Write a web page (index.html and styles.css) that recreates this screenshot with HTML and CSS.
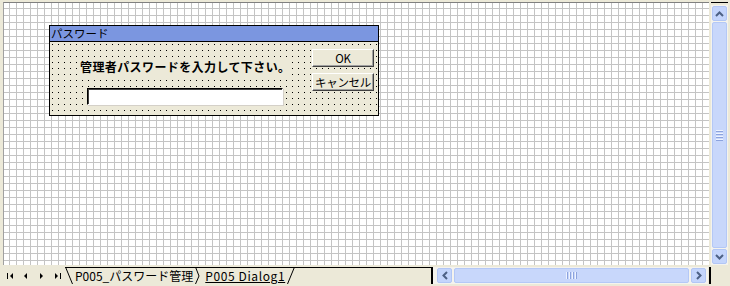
FILE: index.html
```html
<!DOCTYPE html>
<html lang="ja">
<head>
    <meta charset="UTF-8">
    <title>パスワード</title>
    <link rel="stylesheet" href="styles.css">
</head>
<body>
    <div class="window">
        <div class="main">
            <div class="sheet">
                <!-- user form dialog, floating over the sheet grid -->
                <div class="dialog">
                    <div class="dialog-title">パスワード</div>
                    <div class="dialog-body">
                        <div class="dialog-left">
                            <div class="prompt">管理者パスワードを入力して下さい。</div>
                            <div class="pass"></div>
                        </div>
                        <div class="dialog-buttons">
                            <button class="btn">OK</button>
                            <button class="btn">キャンセル</button>
                        </div>
                    </div>
                </div>
            </div>
            <div class="vscroll">
                <div class="split-top"></div>
                <div class="sb-btn">
                    <svg width="9" height="6" viewBox="0 0 9 6"><path d="M1 5 L4.5 1.5 L8 5" fill="none" stroke="#4d6185" stroke-width="2"/></svg>
                </div>
                <div class="vthumb">
                    <div class="grip-v"><i></i><i></i><i></i><i></i></div>
                </div>
                <div class="sb-btn">
                    <svg width="9" height="6" viewBox="0 0 9 6"><path d="M1 1 L4.5 4.5 L8 1" fill="none" stroke="#4d6185" stroke-width="2"/></svg>
                </div>
            </div>
        </div>
        <div class="bottom">
            <div class="nav">
                <svg width="60" height="12" viewBox="0 0 60 12">
                    <rect x="4" y="3" width="1" height="6" fill="#000"/>
                    <path d="M10 3 L7 6 L10 9 Z" fill="#000"/>
                    <path d="M24 3 L21 6 L24 9 Z" fill="#000"/>
                    <path d="M37 3 L40 6 L37 9 Z" fill="#000"/>
                    <path d="M52 3 L55 6 L52 9 Z" fill="#000"/>
                    <rect x="57" y="3" width="1" height="6" fill="#000"/>
                </svg>
            </div>
            <div class="tabs">
                <svg class="slant" width="8" height="17" viewBox="0 0 8 17"><path d="M0.5 0 L7.5 17" stroke="#000" fill="none"/></svg>
                <span class="tab">P005_パスワード管理</span>
                <svg class="slant" width="8" height="17" viewBox="0 0 8 17"><path d="M0.5 0 L4 9 M4 9 L0.5 17" stroke="#000" fill="none"/></svg>
                <span class="tab active">P005 Dialog1</span>
                <svg class="slant" width="8" height="17" viewBox="0 0 8 17"><path d="M7.5 0 L0.5 17" stroke="#000" fill="none"/></svg>
            </div>
            <div class="hscroll">
                <div class="sb-btn h">
                    <svg width="6" height="9" viewBox="0 0 6 9"><path d="M5 1 L1.5 4.5 L5 8" fill="none" stroke="#4d6185" stroke-width="2"/></svg>
                </div>
                <div class="hthumb">
                    <div class="grip-h"><i></i><i></i><i></i><i></i></div>
                </div>
                <div class="sb-btn h">
                    <svg width="6" height="9" viewBox="0 0 6 9"><path d="M1 1 L4.5 4.5 L1 8" fill="none" stroke="#4d6185" stroke-width="2"/></svg>
                </div>
            </div>
            <div class="split-right"></div>
        </div>
    </div>
</body>
</html>
```

FILE: styles.css
```css
body {
    margin: 0;
    background: #ece9d8;
    font-family: "Noto Sans CJK JP", "DejaVu Sans", sans-serif;
}
.window {
    width: 730px;
    height: 286px;
    display: flex;
    flex-direction: column;
    background: #ece9d8;
    overflow: hidden;
}
.main {
    flex: 1;
    display: flex;
    padding: 2px 2px 0 3px;
    min-height: 0;
}
.sheet {
    flex: 1;
    position: relative;
    border-top: 1px solid #808080;
    border-left: 1px solid #a0a0a0;
    background-color: #fff;
    background-image:
        linear-gradient(#c4c4c4 1px, transparent 1px),
        linear-gradient(90deg, #c4c4c4 1px, transparent 1px);
    background-size: 7px 7px;
    background-position: -2px -2px;
}
.dialog {
    position: absolute;
    left: 45px;
    top: 22px;
    width: 328px;
    border: 1px solid #000;
    background: #ece9d8;
}
.dialog-title {
    height: 15px;
    line-height: 15px;
    background: #7b96e0;
    border-bottom: 1px solid #000;
    font-size: 11.5px;
    padding-left: 1px;
    color: #000;
}
.dialog-body {
    display: flex;
    height: 73px;
    background-color: #ece9d8;
    background-image: url("data:image/svg+xml,%3Csvg xmlns='http://www.w3.org/2000/svg' width='6' height='6'%3E%3Crect x='2' y='2' width='1' height='1' fill='%23000'/%3E%3C/svg%3E");
    background-size: 6px 6px;
}
.dialog-left {
    flex: 1;
    padding: 11px 0 0 30px;
}
.prompt {
    font-size: 12px;
    font-weight: bold;
    line-height: 16px;
    height: 16px;
    background: #ece9d8;
    display: inline-block;
    letter-spacing: 0.4px;
}
.pass {
    margin: 11px 0 0 7px;
    width: 194px;
    height: 15px;
    border: 1px solid;
    border-color: #000 #fff #fff #000;
    box-shadow: inset 1px 1px 0 #404040, 1px 1px 0 #d4d0c8;
    background: #fff;
}
.dialog-buttons {
    display: flex;
    flex-direction: column;
    gap: 6px;
    padding: 7px 4px 0 0;
}
.btn {
    width: 62px;
    height: 18px;
    padding: 0;
    font-family: "Noto Sans CJK JP", "DejaVu Sans", sans-serif;
    font-size: 11.5px;
    line-height: 14px;
    letter-spacing: -0.3px;
    color: #000;
    background: #ece9d8;
    border: 1px solid;
    border-color: #fff #404040 #404040 #fff;
    box-shadow: inset -1px -1px 0 #a0a0a0;
}
.vscroll {
    width: 17px;
    display: flex;
    flex-direction: column;
    background: #f4f3ee;
    margin-left: 2px;
}
.split-top {
    height: 2px;
    border-top: 1px solid #000;
    background: #ece9d8;
}
.sb-btn {
    width: 15px;
    height: 15px;
    margin: 1px;
    background: #c4d5fc;
    border: 1px solid #b2c6f5;
    border-radius: 2px;
    box-sizing: border-box;
    display: flex;
    align-items: center;
    justify-content: center;
}
.vthumb {
    flex: 1;
    margin: 0 1px;
    background: #c8d7fb;
    border: 1px solid #b4c8f6;
    border-radius: 2px;
    display: flex;
    align-items: center;
    justify-content: center;
}
.grip-v {
    display: flex;
    flex-direction: column;
    gap: 1px;
}
.grip-v i {
    display: block;
    width: 7px;
    height: 1px;
    background: #eef3fe;
    border-bottom: 1px solid #8ca3de;
}
.bottom {
    height: 21px;
    display: flex;
    align-items: center;
    padding-left: 3px;
}
.nav {
    width: 62px;
    height: 17px;
    display: flex;
    align-items: center;
}
.tabs {
    width: 366px;
    height: 17px;
    display: flex;
    align-items: flex-start;
    font-size: 12px;
    line-height: 16px;
    border-top: 1px solid #000;
    box-sizing: border-box;
}
.slant {
    display: block;
    margin-top: -1px;
}
.tab {
    padding: 0 2px;
    color: #000;
}
.tab.active {
    text-decoration: underline;
    letter-spacing: 0.6px;
}
.hscroll {
    width: 273px;
    height: 17px;
    display: flex;
    align-items: center;
    background: #f4f3ee;
    border-left: 2px solid #000;
    padding-left: 2px;
}
.sb-btn.h {
    margin: 1px 2px;
}
.hthumb {
    flex: 1;
    height: 15px;
    box-sizing: border-box;
    background: #c8d7fb;
    border: 1px solid #b4c8f6;
    border-radius: 2px;
    display: flex;
    align-items: center;
    justify-content: center;
}
.grip-h {
    display: flex;
    gap: 1px;
}
.grip-h i {
    display: block;
    width: 1px;
    height: 7px;
    background: #eef3fe;
    border-right: 1px solid #8ca3de;
}
.split-right {
    width: 2px;
    height: 17px;
    background: #000;
    margin-left: 1px;
}
```
